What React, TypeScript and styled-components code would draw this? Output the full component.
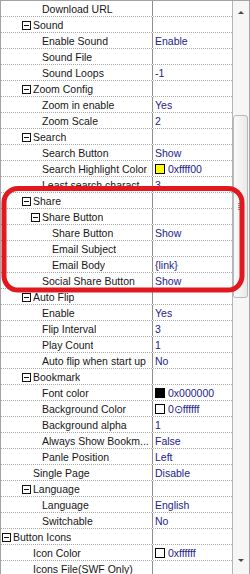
import React from "react";
import styled, { createGlobalStyle } from "styled-components";

type Row = {
	name: string;
	level: number;
	header?: boolean;
	value?: string;
	swatch?: string;
};

const rows: Row[] = [
	{ name: "Download URL", level: 2 },
	{ name: "Sound", level: 1, header: true },
	{ name: "Enable Sound", level: 2, value: "Enable" },
	{ name: "Sound File", level: 2 },
	{ name: "Sound Loops", level: 2, value: "-1" },
	{ name: "Zoom Config", level: 1, header: true },
	{ name: "Zoom in enable", level: 2, value: "Yes" },
	{ name: "Zoom Scale", level: 2, value: "2" },
	{ name: "Search", level: 1, header: true },
	{ name: "Search Button", level: 2, value: "Show" },
	{ name: "Search Highlight Color", level: 2, value: "0xffff00", swatch: "#ffff00" },
	{ name: "Least search charact...", level: 2, value: "3" },
	{ name: "Share", level: 1, header: true },
	{ name: "Share Button", level: 2, header: true },
	{ name: "Share Button", level: 3, value: "Show" },
	{ name: "Email Subject", level: 3 },
	{ name: "Email Body", level: 3, value: "{link}" },
	{ name: "Social Share Button", level: 2, value: "Show" },
	{ name: "Auto Flip", level: 1, header: true },
	{ name: "Enable", level: 2, value: "Yes" },
	{ name: "Flip Interval", level: 2, value: "3" },
	{ name: "Play Count", level: 2, value: "1" },
	{ name: "Auto flip when start up", level: 2, value: "No" },
	{ name: "Bookmark", level: 1, header: true },
	{ name: "Font color", level: 2, value: "0x000000", swatch: "#000000" },
	{ name: "Background Color", level: 2, value: "0\u2299ffffff", swatch: "#ffffff" },
	{ name: "Background alpha", level: 2, value: "1" },
	{ name: "Always Show Bookm...", level: 2, value: "False" },
	{ name: "Panle Position", level: 2, value: "Left" },
	{ name: "Single Page", level: 1, value: "Disable" },
	{ name: "Language", level: 1, header: true },
	{ name: "Language", level: 2, value: "English" },
	{ name: "Switchable", level: 2, value: "No" },
	{ name: "Button Icons", level: 0, header: true },
	{ name: "Icon Color", level: 1, value: "0xffffff", swatch: "#ffffff" },
	{ name: "Icons File(SWF Only)", level: 1 },
];

// text start of each tree level, measured from the row's left edge
const indent = [12, 32, 41, 51];

export default function App() {
	return (
		<>
			<GlobalStyle />
			<Frame>
				<Grid>
					{rows.map((row, i) => (
						<GridRow key={i}>
							<NameCell $pad={row.header ? indent[row.level] - 11 : indent[row.level]}>
								{row.header && <ExpandBox />}
								<NameText>{row.name}</NameText>
							</NameCell>
							<ValueCell>
								{row.swatch && <Swatch $color={row.swatch} />}
								{row.value}
							</ValueCell>
						</GridRow>
					))}
				</Grid>
				<ScrollBar>
					<Arrow $down={false} />
					<Track>
						<Thumb>
							<Grip />
						</Thumb>
					</Track>
					<Arrow $down />
				</ScrollBar>
				<Highlight width="250" height="574" viewBox="0 0 250 574">
					<rect
						x="4"
						y="188.5"
						width="238"
						height="101.5"
						rx="14"
						fill="none"
						stroke="#e1191f"
						strokeWidth="5"
					/>
				</Highlight>
			</Frame>
		</>
	);
}

const GlobalStyle = createGlobalStyle`
	body {
		margin: 0;
		background: #ffffff;
	}
`;

const Frame = styled.div`
	position: relative;
	width: 250px;
	height: 574px;
	box-sizing: border-box;
	border: 1px solid #a3a3a3;
	border-bottom: none;
	display: flex;
	overflow: hidden;
	background: #ffffff;
	font-family: "Liberation Sans", Arial, sans-serif;
	font-size: 10.5px;
`;

const Grid = styled.div`
	width: 231px;
	display: flex;
	flex-direction: column;
	flex-shrink: 0;
`;

const GridRow = styled.div`
	display: flex;
	height: 16px;
	flex-shrink: 0;
	box-sizing: border-box;
	border-bottom: 1px dotted #a8a8a8;
	line-height: 15px;
`;

const NameCell = styled.div<{ $pad: number }>`
	width: 151px;
	flex-shrink: 0;
	display: flex;
	align-items: center;
	padding-left: ${(p) => p.$pad}px;
	padding-top: 1px;
	box-sizing: border-box;
	overflow: hidden;
	white-space: nowrap;
	color: #161616;
`;

const NameText = styled.span`
	overflow: hidden;
`;

const ExpandBox = styled.span`
	position: relative;
	width: 9px;
	height: 9px;
	box-sizing: border-box;
	border: 1px solid #111111;
	background: #ffffff;
	margin-right: 2px;
	flex-shrink: 0;

	&::after {
		content: "";
		position: absolute;
		left: 1px;
		right: 1px;
		top: 3px;
		height: 1px;
		background: #111111;
	}
`;

const ValueCell = styled.div`
	flex: 1;
	display: flex;
	align-items: center;
	padding-left: 2px;
	padding-top: 1px;
	border-left: 1px solid #8e8e8e;
	color: #22228a;
	white-space: nowrap;
	overflow: hidden;
`;

const Swatch = styled.span<{ $color: string }>`
	width: 10px;
	height: 10px;
	box-sizing: border-box;
	border: 1px solid #000000;
	background: ${(p) => p.$color};
	margin-right: 3px;
	flex-shrink: 0;
`;

const ScrollBar = styled.div`
	flex: 1;
	display: flex;
	flex-direction: column;
	border-left: 1px solid #b5b5b5;
	background: #f6f6f6;
`;

const Arrow = styled.div<{ $down: boolean }>`
	height: 22px;
	flex-shrink: 0;
	display: flex;
	justify-content: center;
	align-items: ${(p) => (p.$down ? "flex-start" : "center")};
	padding-top: ${(p) => (p.$down ? "7px" : "0")};
	box-sizing: border-box;

	&::before {
		content: "";
		width: 0;
		height: 0;
		border-left: 3px solid transparent;
		border-right: 3px solid transparent;
		${(p) =>
			p.$down
				? "border-top: 3px solid #4a4a4a;"
				: "border-bottom: 3px solid #4a4a4a;"}
	}
`;

const Track = styled.div`
	flex: 1;
	padding-top: 92px;
`;

const Thumb = styled.div`
	height: 183px;
	margin: 0 1px 0 0;
	box-sizing: border-box;
	border: 1px solid #b9b9b9;
	border-radius: 3px;
	background: linear-gradient(to right, #fbfbfb, #e9e9e9);
	display: flex;
	justify-content: center;
	align-items: center;
`;

const Grip = styled.div`
	width: 6px;
	height: 7px;
	background: repeating-linear-gradient(
		to bottom,
		#7d7d7d 0,
		#7d7d7d 1px,
		transparent 1px,
		transparent 2px
	);
`;

const Highlight = styled.svg`
	position: absolute;
	left: -1px;
	top: -1px;
	pointer-events: none;
`;
